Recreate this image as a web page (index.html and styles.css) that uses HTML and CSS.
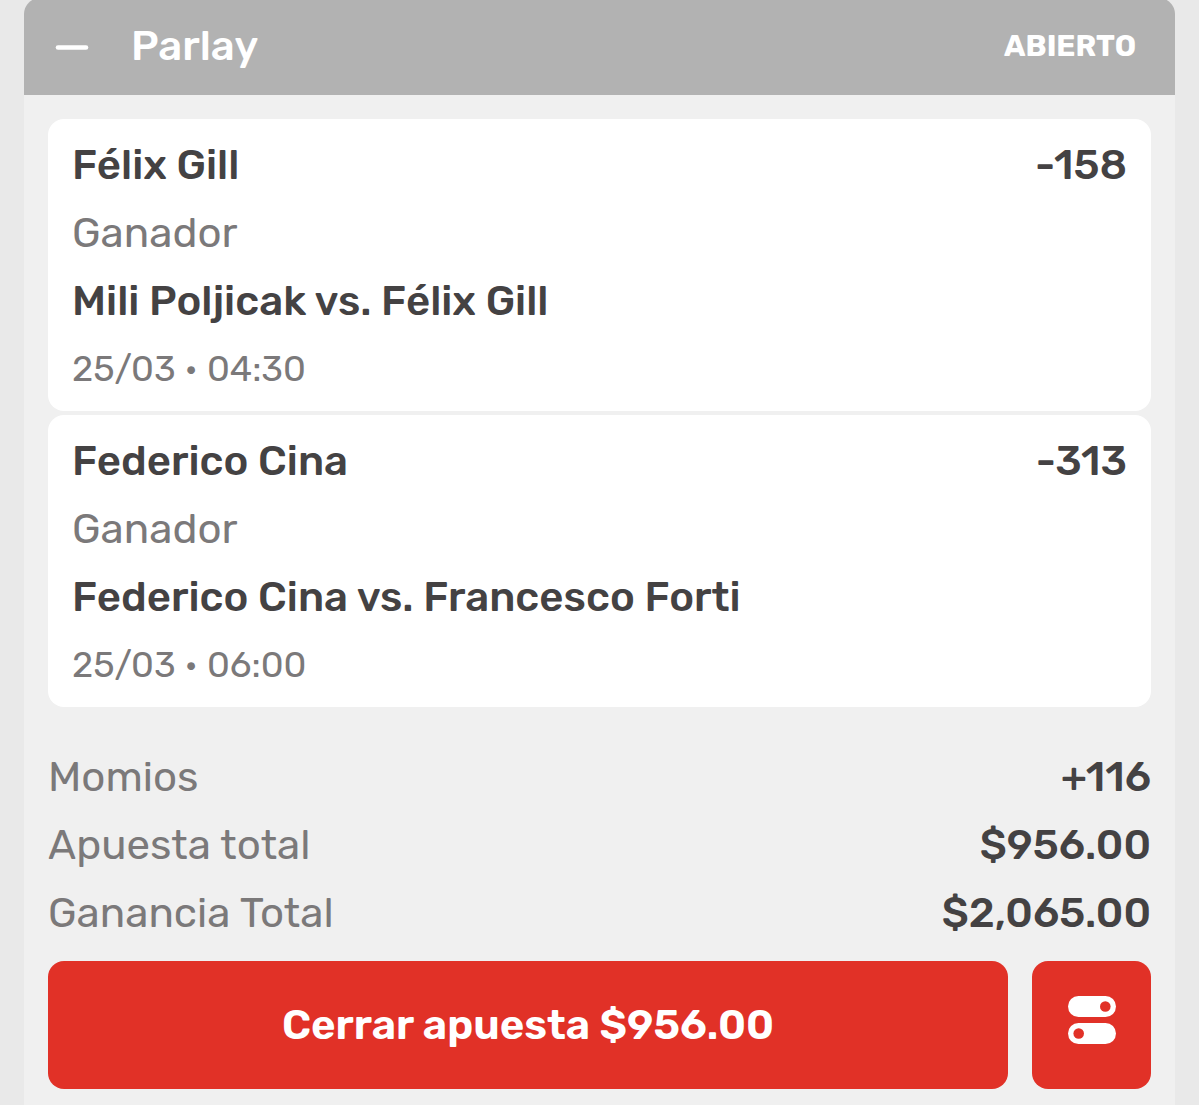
FILE: index.html
```html
<!DOCTYPE html>
<html lang="es">
<head>
  <meta charset="UTF-8" />
  <meta name="viewport" content="width=device-width, initial-scale=1.0"/>
  <title>Mis apuestas - Parlay</title>
  <link rel="stylesheet" href="styles.css">
</head>
<body>
  <main class="bet">
    <header class="bet-header">
      <button class="toggle" aria-label="Contraer">
        <svg width="34" height="34" viewBox="0 0 34 34" fill="none" stroke="#fff" stroke-width="4.6" stroke-linecap="round">
          <path d="M3 18.5H31"/>
        </svg>
      </button>
      <h1>Parlay</h1>
      <span class="status">ABIERTO</span>
    </header>

    <div class="bet-body">
      <section class="selection">
        <div class="row">
          <h2>Félix Gill</h2>
          <strong>-158</strong>
        </div>
        <p>Ganador</p>
        <h3>Mili Poljicak vs. Félix Gill</h3>
        <p class="date">25/03 • 04:30</p>
      </section>

      <section class="selection">
        <div class="row">
          <h2>Federico Cina</h2>
          <strong>-313</strong>
        </div>
        <p>Ganador</p>
        <h3>Federico Cina vs. Francesco Forti</h3>
        <p class="date">25/03 • 06:00</p>
      </section>

      <div class="summary">
        <div class="row">
          <span>Momios</span>
          <strong>+116</strong>
        </div>
        <div class="row">
          <span>Apuesta total</span>
          <strong>$956.00</strong>
        </div>
        <div class="row">
          <span>Ganancia Total</span>
          <strong>$2,065.00</strong>
        </div>
      </div>

      <div class="actions">
        <button class="cashout">Cerrar apuesta $956.00</button>
        <button class="settings" aria-label="Opciones de cierre">
          <svg width="48" height="48" viewBox="0 0 48 48">
            <rect width="48" height="21" rx="10.5" fill="#fff"/>
            <circle cx="37.3" cy="10.5" r="5.3" fill="#e13127"/>
            <rect y="27" width="48" height="21" rx="10.5" fill="#fff"/>
            <circle cx="10.7" cy="37.5" r="5.3" fill="#e13127"/>
          </svg>
        </button>
      </div>
    </div>
  </main>
</body>
</html>
```
FILE: styles.css
```css
* {
  box-sizing: border-box;
  margin: 0;
  padding: 0;
}
body {
  font-family: Rubik, Roboto, sans-serif;
  font-size: 42px;
  line-height: 52px;
  background-color: #e9e9e9;
  color: #444243;
}
h1, h2, h3, strong {
  font-size: 42px;
  font-weight: 500;
}
button {
  font-family: inherit;
  border: none;
  cursor: pointer;
}
.bet {
  min-height: 100vh;
  margin: -2px 24px 0;
  background-color: #f0f0f0;
  border-radius: 16px 16px 0 0;
}
.bet-header {
  display: flex;
  align-items: center;
  padding: 22px 39px 23px 31px;
  background-color: #b2b2b2;
  color: white;
  border-radius: 16px 16px 0 0;
}
.toggle {
  display: flex;
  margin-right: 42px;
  background: none;
}
.status {
  margin-left: auto;
  font-size: 30px;
  font-weight: 700;
}
.bet-body {
  padding: 24px 24px 16px;
}
.selection {
  display: flex;
  flex-direction: column;
  gap: 16px;
  margin-bottom: 4px;
  padding: 20px 24px 16px;
  background-color: white;
  border-radius: 16px;
}
.row {
  display: flex;
  justify-content: space-between;
}
.selection p, .summary span {
  color: #7b797a;
}
.selection .date {
  font-size: 36px;
}
.summary {
  display: flex;
  flex-direction: column;
  gap: 16px;
  padding: 40px 0 22px;
}
.actions {
  display: flex;
  gap: 24px;
}
.actions button {
  height: 128px;
  background-color: #e13127;
  color: white;
  border-radius: 16px;
}
.actions .cashout {
  flex: 1;
  font-size: 42px;
  font-weight: 600;
}
.settings {
  display: flex;
  justify-content: center;
  width: 119px;
  padding-top: 35px;
}
```
